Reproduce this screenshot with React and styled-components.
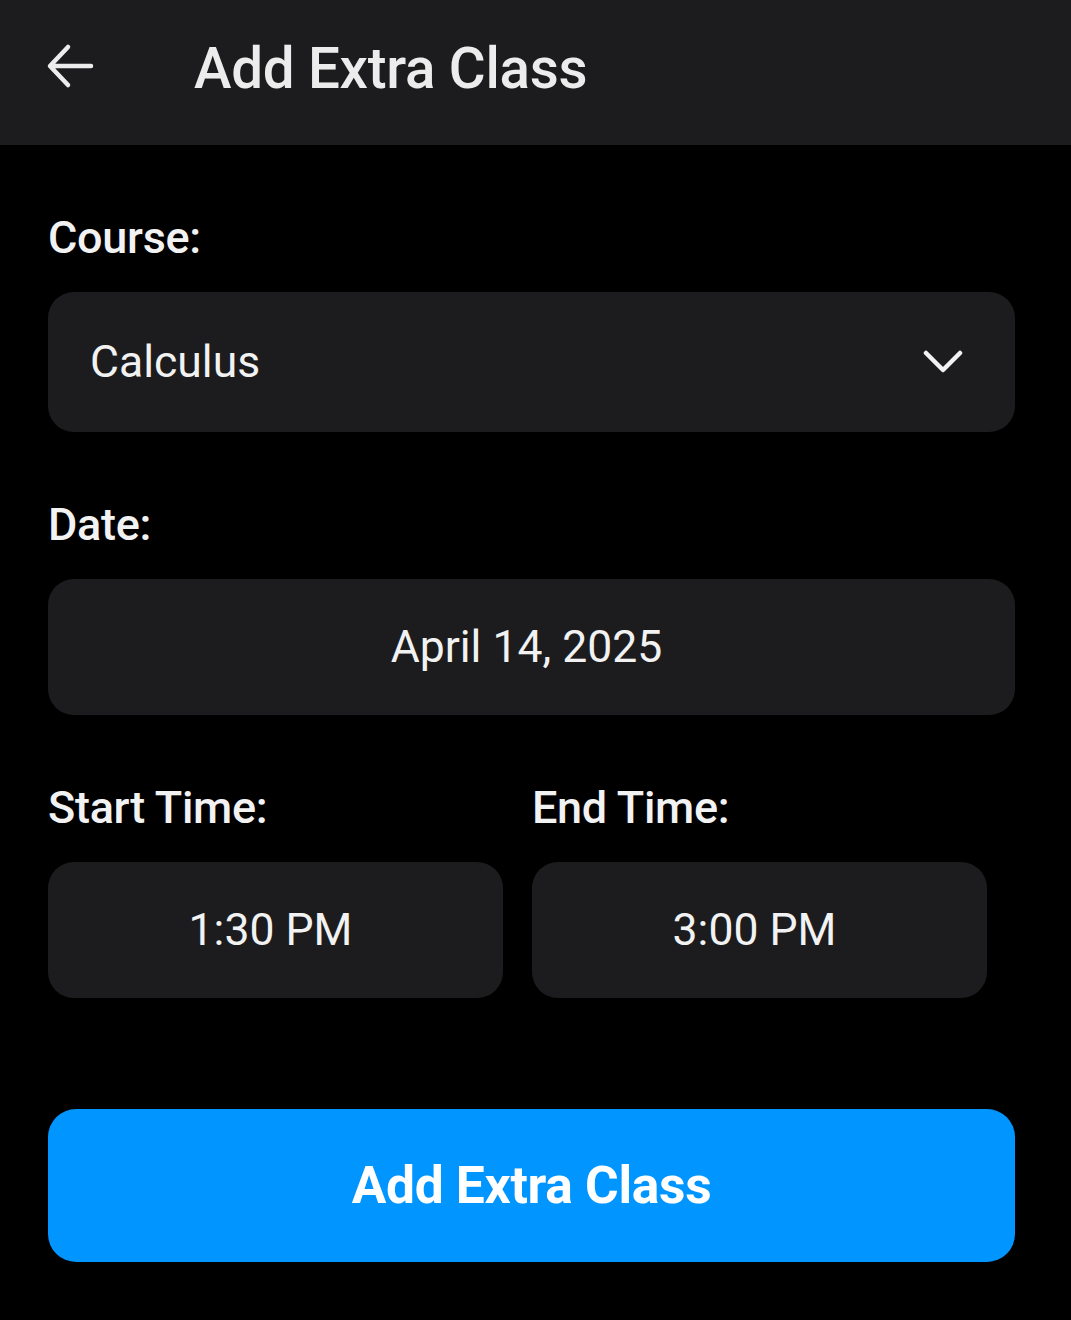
import React from 'react'
import styled, { createGlobalStyle } from 'styled-components'

const GlobalStyle = createGlobalStyle`
  html, body { margin: 0; padding: 0; background: #000; }
  body { font-family: Roboto, "Liberation Sans", sans-serif; color: #fff; }
`

const Page = styled.div`
  width: 1071px;
  min-height: 1320px;
  background: #000;
`

const Header = styled.header`
  height: 145px;
  background: #1c1c1e;
  display: flex;
  align-items: center;
  padding: 0 0 0 46px;
  box-sizing: border-box;

  & h1 {
    margin: 0 0 0 100px;
    font-size: 56.5px;
    font-weight: 500;
    color: #ececec;
    letter-spacing: -0.3px;
    line-height: 1;
    padding-bottom: 6px;
  }
`

const BackButton = styled.button`
  background: none;
  border: 0;
  padding: 0;
  width: 48px;
  height: 48px;
  display: flex;
  align-items: center;
  justify-content: center;
  color: #ececec;
  margin-bottom: 14px;
`

const Form = styled.main`
  padding: 70px 56px 0 48px;
  display: flex;
  flex-direction: column;
`

const Field = styled.div`
  display: flex;
  flex-direction: column;
  margin-bottom: ${p => p.$gap || 0}px;
`

const Label = styled.label`
  font-size: 45px;
  font-weight: 500;
  color: #f2f2f2;
  line-height: 1;
  margin-bottom: 32px;
  letter-spacing: -0.3px;
`

const Box = styled.div`
  height: ${p => p.$h || 136}px;
  background: #1c1c1e;
  border-radius: 26px;
  display: flex;
  align-items: center;
  justify-content: ${p => (p.$center ? 'center' : 'space-between')};
  padding: 0 52px 0 42px;
  box-sizing: border-box;
  font-size: 44.5px;
  color: #f2f2f2;
`

const TimeRow = styled.div`
  display: flex;
  gap: 29px;
  margin-bottom: 111px;

  & > div { width: 455px; }
`

const SubmitButton = styled.button`
  height: 153px;
  width: 100%;
  border: 0;
  border-radius: 28px;
  background: #0095ff;
  color: #fff;
  font-family: Roboto, "Liberation Sans", sans-serif;
  font-size: 51.5px;
  font-weight: 700;
  letter-spacing: -0.3px;
`

const Chevron = () => (
  <svg width="40" height="24" viewBox="0 0 40 24" fill="none">
    <path d="M3 3 L20 20 L37 3" stroke="#f2f2f2" strokeWidth="4.5" strokeLinecap="round" strokeLinejoin="round" />
  </svg>
)

const ArrowLeft = () => (
  <svg width="48" height="48" viewBox="0 0 48 48" fill="none">
    <path d="M45 24 H5 M22 5 L4 24 L22 43" stroke="currentColor" strokeWidth="4.5" strokeLinecap="round" strokeLinejoin="round" />
  </svg>
)

export default function App() {
  return (
    <Page>
      <GlobalStyle />
      <Header>
        <BackButton aria-label="Back"><ArrowLeft /></BackButton>
        <h1>Add Extra Class</h1>
      </Header>
      <Form>
        <Field $gap={70}>
          <Label>Course:</Label>
          <Box $h={140}>
            <span>Calculus</span>
            <Chevron />
          </Box>
        </Field>
        <Field $gap={70}>
          <Label>Date:</Label>
          <Box $center>April 14, 2025</Box>
        </Field>
        <TimeRow>
          <Field>
            <Label>Start Time:</Label>
            <Box $center>1:30 PM</Box>
          </Field>
          <Field>
            <Label>End Time:</Label>
            <Box $center>3:00 PM</Box>
          </Field>
        </TimeRow>
        <SubmitButton>Add Extra Class</SubmitButton>
      </Form>
    </Page>
  )
}
